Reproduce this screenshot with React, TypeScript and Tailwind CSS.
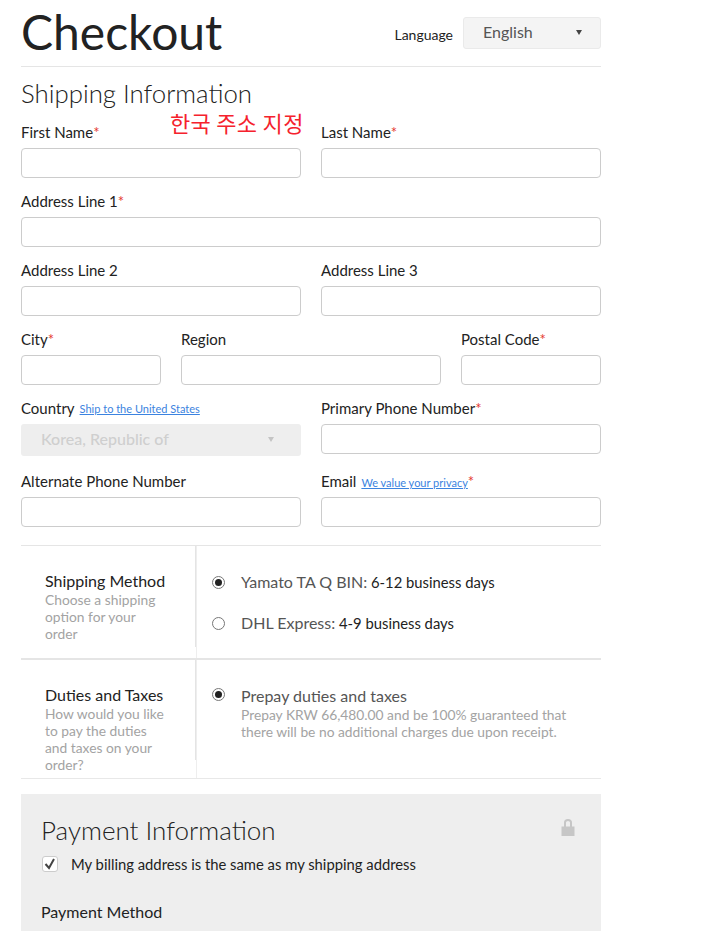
import React from 'react';

function Field({ label, required, extra, className }: { label: string; required?: boolean; extra?: React.ReactNode; className?: string }) {
  return (
    <div className={className}>
      <div className="flex h-[17px] items-center text-[15px] leading-[17px] text-[#222]">
        <span>{label}</span>
        {extra}
        {required && <span className="text-[#e5392f]">*</span>}
      </div>
      <div className="mt-[7px] h-[30px] rounded-[4px] border border-[#ccc] bg-white" />
    </div>
  );
}

function Radio({ checked }: { checked?: boolean }) {
  return (
    <span className="flex h-[13px] w-[13px] shrink-0 items-center justify-center rounded-full border border-[#777] bg-white">
      {checked && <span className="h-[7px] w-[7px] rounded-full bg-[#222]" />}
    </span>
  );
}

export default function App() {
  return (
    <div className="h-[931px] overflow-hidden bg-white font-['Lato',sans-serif]">
      <div className="relative ml-[21px] w-[580px]">
        {/* Header */}
        <div className="flex h-[67px] items-start justify-between border-b border-[#e5e5e5]">
          <h1 className="mt-[3px] text-[48px] font-normal leading-[58px] text-[#222]">Checkout</h1>
          <div className="mt-[17px] flex items-start">
            <span className="mt-[9px] text-[14px] leading-[17px] text-[#222]">Language</span>
            <div className="ml-[10px] flex h-[32px] w-[138px] items-center justify-between rounded-[3px] border border-[#eaeaea] bg-[#f4f4f4] pb-[2px] pl-[19px] pr-[18px] text-[16px] text-[#555]">
              <span>English</span>
              <span className="h-0 w-0 border-x-[3px] border-t-[5px] border-x-transparent border-t-[#444]" />
            </div>
          </div>
        </div>

        <h2 className="mt-[11px] text-[25.8px] font-light leading-[31px] text-[#222]">Shipping Information</h2>
        <span className="absolute left-[149px] top-[108px] font-['Noto_Sans_CJK_KR',sans-serif] text-[22px] leading-[29px] tracking-[0.3px] text-[#f5222d]">한국 주소 지정</span>

        {/* Address form */}
        <div className="mt-[15px] grid grid-cols-2 gap-x-[20px] gap-y-[15px]">
          <Field label="First Name" required />
          <Field label="Last Name" required />
          <Field label="Address Line 1" required className="col-span-2" />
          <Field label="Address Line 2" />
          <Field label="Address Line 3" />
          <div className="col-span-2 grid grid-cols-[140px_260px_140px] gap-x-[20px]">
            <Field label="City" required />
            <Field label="Region" />
            <Field label="Postal Code" required />
          </div>
          <div>
            <div className="flex h-[17px] items-center text-[15px] leading-[17px] text-[#222]">
              <span>Country</span>
              <a className="ml-[5px] text-[11px] text-[#3b83e0] underline">Ship to the United States</a>
            </div>
            <div className="mt-[7px] flex h-[32px] items-center justify-between rounded-[3px] bg-[#eeeeee] pb-[2px] pl-[20px] pr-[27px] text-[16px] font-medium text-[#cfcfcf]">
              <span>Korea, Republic of</span>
              <span className="h-0 w-0 border-x-[3px] border-t-[5px] border-x-transparent border-t-[#c4c4c4]" />
            </div>
          </div>
          <Field label="Primary Phone Number" required />
          <Field label="Alternate Phone Number" className="mt-[2px]" />
          <Field
            label="Email"
            required
            className="mt-[2px]"
            extra={<a className="ml-[5px] mt-[2px] text-[11px] text-[#3b83e0] underline">We value your privacy</a>}
          />
        </div>

        {/* Shipping method */}
        <div className="mt-[18px] flex h-[113px] items-stretch border-t border-[#e5e5e5]">
          <div className="h-[101px] w-[175px] border-r border-[#e4e4e4] pl-[24px] pt-[26px]">
            <div className="text-[16px] leading-[17px] text-[#222]">Shipping Method</div>
            <p className="mt-[2px] w-[125px] text-[13.8px] leading-[17px] text-[#a3a3a3]">Choose a shipping option for your order</p>
          </div>
          <div className="flex-1 border-l border-[#eeeeee] pl-[15px] pt-[27px] text-[14.8px] leading-[18px]">
            <div className="flex items-center gap-[16px]">
              <Radio checked />
              <span className="text-[#222]"><span className="text-[16px] text-[#555]">Yamato TA Q BIN:</span> 6-12 business days</span>
            </div>
            <div className="mt-[23px] flex items-center gap-[16px]">
              <Radio />
              <span className="text-[#222]"><span className="text-[16px] text-[#555]">DHL Express:</span> 4-9 business days</span>
            </div>
          </div>
        </div>

        {/* Duties */}
        <div className="flex h-[121px] items-stretch border-b border-t-2 border-b-[#e8e8e8] border-t-[#e5e5e5]">
          <div className="h-[100px] w-[175px] border-r border-[#e4e4e4] pl-[24px] pt-[26px]">
            <div className="whitespace-nowrap text-[16px] leading-[17px] text-[#222]">Duties and Taxes</div>
            <p className="mt-[2px] w-[125px] text-[13.8px] leading-[17px] text-[#a3a3a3]">How would you like to pay the duties and taxes on your order?</p>
          </div>
          <div className="flex flex-1 items-start gap-[16px] border-l border-[#eeeeee] pl-[15px] pt-[27px]">
            <span className="mt-[1px]"><Radio checked /></span>
            <div>
              <div className="text-[16px] leading-[18px] text-[#555]">Prepay duties and taxes</div>
              <p className="mt-[1px] w-[345px] text-[13.8px] leading-[17px] text-[#a3a3a3]">Prepay KRW 66,480.00 and be 100% guaranteed that there will be no additional charges due upon receipt.</p>
            </div>
          </div>
        </div>

        {/* Payment */}
        <div className="mt-[15px] h-[200px] bg-[#eeeeee] px-[20px] pt-[21px]">
          <div className="flex items-start justify-between">
            <h2 className="text-[26px] font-light leading-[31px] text-[#222]">Payment Information</h2>
            <svg viewBox="0 0 14 17" className="mr-[6px] mt-[4px] h-[17px] w-[14px] text-[#c6c6c6]" fill="none">
              <path d="M4 8V3.5a3 2.5 0 0 1 6 0V8" stroke="currentColor" strokeWidth="2" />
              <rect x="0.5" y="7.5" width="13" height="9.5" fill="currentColor" />
            </svg>
          </div>
          <div className="ml-[1px] mt-[9px] flex items-center gap-[13px]">
            <span className="flex h-[16px] w-[16px] items-center justify-center rounded-[3px] border border-[#ccc] bg-white text-[#444]">
              <svg viewBox="0 0 14 14" className="h-[14px] w-[14px]" fill="none" stroke="currentColor" strokeWidth="2">
                <path d="M2.5 7 6 11 11 2" />
              </svg>
            </span>
            <span className="text-[14.8px] leading-[18px] text-[#222]">My billing address is the same as my shipping address</span>
          </div>
          <div className="mt-[30px] text-[16px] leading-[18px] text-[#222]">Payment Method</div>
        </div>
      </div>
    </div>
  );
}
